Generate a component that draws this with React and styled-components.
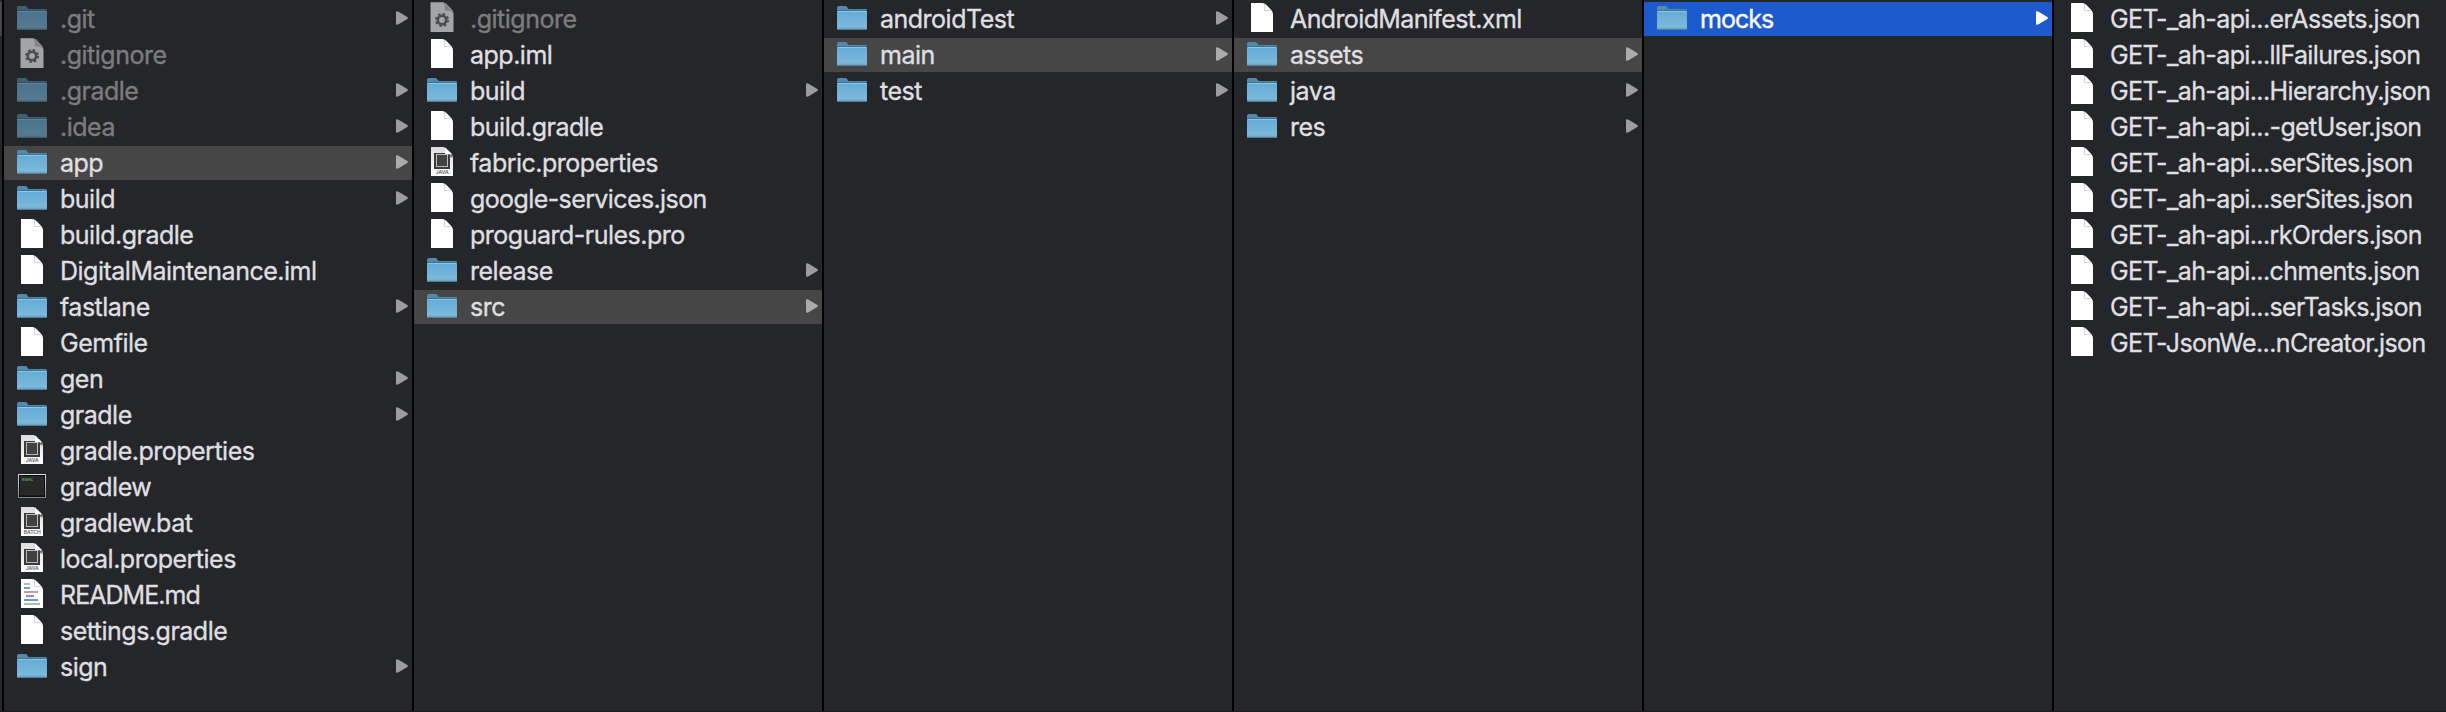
import React from 'react';
import styled, { createGlobalStyle } from 'styled-components';

const GlobalStyle = createGlobalStyle`
  html, body { margin: 0; background: #25262a; }
  * { box-sizing: border-box; }
`;

const Browser = styled.main`
  display: flex;
  width: 2446px;
  height: 712px;
  overflow: hidden;
  background: #25262a;
  border-bottom: 1px solid #1b1b1e;
  font-family: Inter, 'Liberation Sans', sans-serif;
  font-size: 25px;
`;

const PreviousColumn = styled.div`
  flex: none;
  width: 2px;
  padding-top: 2px;
`;

const PreviousSelection = styled.div`
  height: 34px;
  background: #464646;
`;

const Column = styled.ul`
  flex: none;
  width: 410px;
  margin: 0;
  padding: 2px 0 0;
  list-style: none;
  border-left: 2px solid #000;
  display: flex;
  flex-direction: column;
  gap: 2px;
`;

const selectionColors = { trail: '#464646', active: '#1d5acb' };

const Row = styled.li`
  display: flex;
  align-items: center;
  height: 34px;
  padding: 0 4px 0 12px;
  background: ${(p) => selectionColors[p.$selection] || 'transparent'};
  color: ${(p) => (p.$selection === 'active' ? '#fff' : p.$hidden ? '#7c7c7e' : '#dfdfe0')};
`;

const IconSlot = styled.span`
  flex: none;
  align-self: flex-start;
  width: 32px;
  height: 32px;
  margin: -2px 12px 0 0;
  opacity: ${(p) => (p.$dim ? 0.58 : 1)};
  svg { display: block; }
`;

const Label = styled.span`
  flex: 1;
  line-height: 34px;
  white-space: pre;
  letter-spacing: ${(p) => p.$tracking}px;
  -webkit-text-stroke: 0.35px currentColor;
`;

const Arrow = styled.svg`
  flex: none;
  margin-top: -2px;
  fill: ${(p) => (p.$selection === 'active' ? '#fff' : p.$selection ? '#ababab' : '#9d9d9f')};
`;

const GradientDefs = styled.svg`
  position: absolute;
`;

const Defs = () => (
  <GradientDefs width="0" height="0">
    <defs>
      <linearGradient id="folder" x1="0" y1="0" x2="0" y2="1">
        <stop offset="0" stopColor="#64abd8" />
        <stop offset="0.82" stopColor="#7cb8da" />
        <stop offset="1" stopColor="#6ea4c3" />
      </linearGradient>
      <linearGradient id="paper" x1="0" y1="0" x2="0" y2="1">
        <stop offset="0" stopColor="#dcdcdc" />
        <stop offset="1" stopColor="#fff" />
      </linearGradient>
      <linearGradient id="frame" x1="0" y1="0" x2="0" y2="1">
        <stop offset="0" stopColor="#cfe3ea" />
        <stop offset="1" stopColor="#85888a" />
      </linearGradient>
    </defs>
  </GradientDefs>
);

const FolderIcon = () => (
  <svg width="32" height="32" viewBox="0 0 32 32">
    <path d="M1 11V7.8Q1 6 2.8 6H9.3Q10.6 6 11.4 7.4Q12.2 9 13.4 9H29.8Q31 9 31 10V12H1Z" fill="#5489a9" />
    <path d="M1 10H31V11H1Z" fill="#41708d" />
    <path d="M1 11H31V28.4Q31 29.8 29.6 29.8H2.4Q1 29.8 1 28.4Z" fill="url(#folder)" />
    <path d="M2 11.5H30" stroke="#86c9ec" />
    <path d="M1.3 29.4H30.7" stroke="#517f9a" />
  </svg>
);

const FileIcon = () => (
  <svg width="32" height="32" viewBox="0 0 32 32">
    <path d="M5 3H16.5Q19 3.4 21 5.5L25 9.8Q26.8 11.8 27 14V32H5Z" fill="#fff" />
    <path d="M18.5 4V10.5H25.4" fill="none" stroke="#d4d4d4" />
  </svg>
);

const GearFileIcon = () => (
  <svg width="32" height="32" viewBox="0 0 32 32">
    <path d="M4.5 2.3H17Q19.5 3 21.5 5L25.3 9Q27.3 11.3 27.5 13.5V32H4.5Z" fill="#fff" />
    <path d="M17 2.3Q19 4 18.8 10.5Q25 10 27.5 13.5Q27.3 11.3 25.3 9L21.5 5Q19.5 3 17 2.3Z" fill="#c9c9c9" />
    <circle cx="16" cy="20" r="4.2" fill="none" stroke="#62696c" strokeWidth="2.6" />
    <circle cx="16" cy="20" r="6.1" fill="none" stroke="#62696c" strokeWidth="1.8" strokeDasharray="2.5 2.29" />
  </svg>
);

const ChipFileIcon = ({ tag }) => (
  <svg width="32" height="32" viewBox="0 0 32 32">
    <path d="M5 3H18L27 12V32H5Z" fill="url(#paper)" />
    <rect x="8" y="9" width="16" height="16" fill="#3b3b3b" />
    <path d="M19 3.3V10.5H26.5Z" fill="#fff" />
    <path d="M20 10.5H26.5V14Z" fill="#444" opacity=".7" />
    <rect x="10.5" y="10.5" width="11" height="12" fill="#414141" stroke="#bdbdbd" />
    <text x="16.2" y="30" textAnchor="middle" fontSize="5" fontWeight="600" fill="#666">{tag}</text>
  </svg>
);

const TerminalIcon = () => (
  <svg width="32" height="32" viewBox="0 0 32 32">
    <rect x="2" y="6" width="28" height="24" rx="1" fill="url(#frame)" />
    <rect x="3" y="7" width="26" height="22" fill="#0b0b0b" />
    <rect x="4" y="8" width="24" height="19.5" fill="#282828" />
    <text x="5.8" y="13" fontSize="5" fontWeight="700" fontFamily="Liberation Mono, monospace" letterSpacing="-.3" fill="#4fa34e">exec</text>
  </svg>
);

const MarkdownIcon = () => (
  <svg width="32" height="32" viewBox="0 0 32 32">
    <path d="M5 3H16.5Q19 3.4 21 5.5L25 9.8Q26.8 11.8 27 14V32H5Z" fill="#fff" />
    <path d="M18.5 4V10.5H25.4" fill="none" stroke="#d4d4d4" />
    <path d="M8 8H14M8 28H24" stroke="#b5b9b9" strokeWidth="2" />
    <path d="M8 12H14M8 24H22" stroke="#62a5b5" strokeWidth="2" />
    <path d="M8 16H22" stroke="#cf989d" strokeWidth="2" />
    <path d="M10 20H18" stroke="#a17ef5" strokeWidth="2" />
  </svg>
);

const icons = {
  folder: <FolderIcon />,
  file: <FileIcon />,
  gear: <GearFileIcon />,
  java: <ChipFileIcon tag="JAVA" />,
  batch: <ChipFileIcon tag="BATCH" />,
  exec: <TerminalIcon />,
  markdown: <MarkdownIcon />,
};

const dir = (name, extra) => ({ name, kind: 'folder', ...extra });
const file = (name, kind = 'file', extra) => ({ name, kind, ...extra });
const hidden = { hidden: true };
const trail = { selection: 'trail' };

const columns = [
  [
    dir('.git', hidden), file('.gitignore', 'gear', hidden), dir('.gradle', hidden), dir('.idea', hidden),
    dir('app', trail), dir('build'), file('build.gradle'), file('DigitalMaintenance.iml'), dir('fastlane'),
    file('Gemfile'), dir('gen'), dir('gradle'), file('gradle.properties', 'java'), file('gradlew', 'exec'),
    file('gradlew.bat', 'batch'), file('local.properties', 'java'),
    file('README.md', 'markdown', { tracking: -0.95 }),
    file('settings.gradle'), dir('sign'),
  ],
  [
    file('.gitignore', 'gear', hidden), file('app.iml'), dir('build'), file('build.gradle'),
    file('fabric.properties', 'java'), file('google-services.json', 'file', { tracking: -0.6 }),
    file('proguard-rules.pro'), dir('release'), dir('src', trail),
  ],
  [dir('androidTest'), dir('main', trail), dir('test')],
  [file('AndroidManifest.xml', 'file', { tracking: -0.62 }), dir('assets', trail), dir('java'), dir('res')],
  [dir('mocks', { selection: 'active', tracking: -0.95 })],
  [
    'GET-_ah-api...erAssets.json', 'GET-_ah-api...llFailures.json', 'GET-_ah-api...Hierarchy.json',
    'GET-_ah-api...-getUser.json', 'GET-_ah-api...serSites.json', 'GET-_ah-api...serSites.json',
    'GET-_ah-api...rkOrders.json', 'GET-_ah-api...chments.json', 'GET-_ah-api...serTasks.json',
    'GET-JsonWe...nCreator.json',
  ].map((name) => file(name, 'file', { tracking: -0.62 })),
];

const Entry = ({ name, kind, hidden: isHidden, selection, tracking = -0.5 }) => (
  <Row $hidden={isHidden} $selection={selection}>
    <IconSlot $dim={isHidden}>{icons[kind]}</IconSlot>
    <Label $tracking={tracking}>{name}</Label>
    {kind === 'folder' && (
      <Arrow width="12" height="14" viewBox="0 0 12 14" $selection={selection}>
        <path d="M0 1Q0 0 1 .2Q2 .3 3 .9L11.3 6Q12.6 7 11.3 8L3 13.1Q2 13.7 1 13.8Q0 14 0 13Z" />
      </Arrow>
    )}
  </Row>
);

export default function App() {
  return (
    <>
      <GlobalStyle />
      <Defs />
      <Browser>
        <PreviousColumn><PreviousSelection /></PreviousColumn>
        {columns.map((entries, c) => (
          <Column key={c}>
            {entries.map((entry, i) => <Entry key={i} {...entry} />)}
          </Column>
        ))}
      </Browser>
    </>
  );
}
